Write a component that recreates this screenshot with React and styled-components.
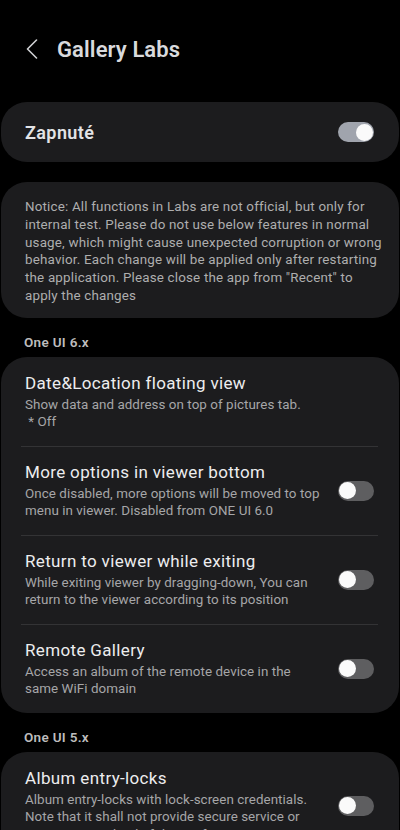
import React from "react";
import styled, { createGlobalStyle } from "styled-components";

const GlobalStyle = createGlobalStyle`
  html, body {
    margin: 0;
    padding: 0;
    background: #000;
  }
  body {
    font-family: Roboto, "Noto Sans", sans-serif;
    -webkit-font-smoothing: antialiased;
  }
`;

const Page = styled.div`
  width: 400px;
  min-height: 830px;
  background: #000;
  overflow: hidden;
`;

const Header = styled.header`
  height: 98px;
  margin-bottom: 4px;
  display: flex;
  align-items: center;
  padding-left: 25px;
  gap: 18px;
  box-sizing: border-box;
`;

const BackButton = styled.button`
  background: none;
  border: 0;
  padding: 0;
  width: 14px;
  height: 20px;
  display: flex;
  align-items: center;
  justify-content: center;
  cursor: pointer;
`;

const Title = styled.h1`
  margin: 0;
  font-size: 22px;
  font-weight: 600;
  color: #d9dadd;
  letter-spacing: 0.1px;
`;

const Card = styled.section`
  background: #1c1c1e;
  border-radius: 26px;
  margin: 0 1px;
`;

const MasterRow = styled(Card)`
  height: 60px;
  display: flex;
  align-items: center;
  justify-content: space-between;
  padding: 0 25px 0 24px;
`;

const MasterLabel = styled.span`
  font-size: 18px;
  font-weight: 600;
  color: #e2e3e6;
  letter-spacing: 0.4px;
`;

const NoticeCard = styled(Card)`
  margin-top: 20px;
  padding: 16px 8px 13px 24px;
  font-size: 13.4px;
  line-height: 17.8px;
  color: #aeaeae;
  letter-spacing: 0.18px;
  white-space: nowrap;
`;

const SectionLabel = styled.div`
  padding: 16px 24px 7px;
  font-size: 13.5px;
  line-height: 16px;
  font-weight: 600;
  color: #bdbdbd;
  letter-spacing: 0.3px;
`;

const Item = styled.div`
  display: flex;
  align-items: center;
  justify-content: space-between;
  padding: 16px 25px 15px 24px;
  position: relative;

  & + &::before {
    content: "";
    position: absolute;
    top: 0;
    left: 20px;
    right: 21px;
    height: 1px;
    background: #333335;
  }
`;

const ItemText = styled.div`
  display: flex;
  flex-direction: column;
  white-space: nowrap;
`;

const ItemTitle = styled.div`
  font-size: 17px;
  line-height: 21px;
  color: #ededee;
  margin-bottom: 2px;
  letter-spacing: 0.35px;
`;

const ItemSub = styled.div`
  font-size: 13.4px;
  line-height: 17.5px;
  color: #a6a6a8;
  letter-spacing: 0.05px;
`;

const Track = styled.div`
  flex: none;
  width: 36px;
  height: 20px;
  border-radius: 10px;
  background: ${(p) => (p.on ? "#a0a4ad" : "#5e5e60")};
  position: relative;
`;

const Thumb = styled.div`
  position: absolute;
  top: 1.5px;
  left: ${(p) => (p.on ? "18px" : "1px")};
  width: 17px;
  height: 17px;
  border-radius: 50%;
  background: #fafafa;
`;

const Toggle = ({ on }) => (
  <Track on={on}>
    <Thumb on={on} />
  </Track>
);

const Lines = ({ lines }) =>
  lines.map((l, i) => (
    <React.Fragment key={i}>
      {i > 0 && <br />}
      {l}
    </React.Fragment>
  ));

const ui6 = [
  {
    title: "Date&Location floating view",
    sub: ["Show data and address on top of pictures tab.", "\u00a0* Off"],
  },
  {
    title: "More options in viewer bottom",
    sub: [
      "Once disabled, more options will be moved to top",
      "menu in viewer. Disabled from ONE UI 6.0",
    ],
    toggle: true,
  },
  {
    title: "Return to viewer while exiting",
    sub: [
      "While exiting viewer by dragging-down, You can",
      "return to the viewer according to its position",
    ],
    toggle: true,
  },
  {
    title: "Remote Gallery",
    sub: ["Access an album of the remote device in the", "same WiFi domain"],
    toggle: true,
  },
];

const ui5 = [
  {
    title: "Album entry-locks",
    sub: [
      "Album entry-locks with lock-screen credentials.",
      "Note that it shall not provide secure service or",
      "guarantee any kind of data safety.",
    ],
    toggle: true,
  },
];

const notice = [
  "Notice: All functions in Labs are not official, but only for",
  "internal test. Please do not use below features in normal",
  "usage, which might cause unexpected corruption or wrong",
  "behavior. Each change will be applied only after restarting",
  'the application. Please close the app from "Recent" to',
  "apply the changes",
];

const Section = ({ label, items }) => (
  <>
    <SectionLabel>{label}</SectionLabel>
    <Card>
      {items.map((it) => (
        <Item key={it.title}>
          <ItemText>
            <ItemTitle>{it.title}</ItemTitle>
            <ItemSub>
              <Lines lines={it.sub} />
            </ItemSub>
          </ItemText>
          {it.toggle && <Toggle on={false} />}
        </Item>
      ))}
    </Card>
  </>
);

export default function App() {
  return (
    <Page>
      <GlobalStyle />
      <Header>
        <BackButton aria-label="Back">
          <svg width="12" height="20" viewBox="0 0 12 20">
            <path
              d="M10.5 1 L1.5 10 L10.5 19"
              fill="none"
              stroke="#cfd0d3"
              strokeWidth="1.6"
              strokeLinecap="round"
              strokeLinejoin="round"
            />
          </svg>
        </BackButton>
        <Title>Gallery Labs</Title>
      </Header>

      <MasterRow>
        <MasterLabel>Zapnuté</MasterLabel>
        <Toggle on />
      </MasterRow>

      <NoticeCard>
        <Lines lines={notice} />
      </NoticeCard>

      <Section label="One UI 6.x" items={ui6} />
      <Section label="One UI 5.x" items={ui5} />
    </Page>
  );
}
